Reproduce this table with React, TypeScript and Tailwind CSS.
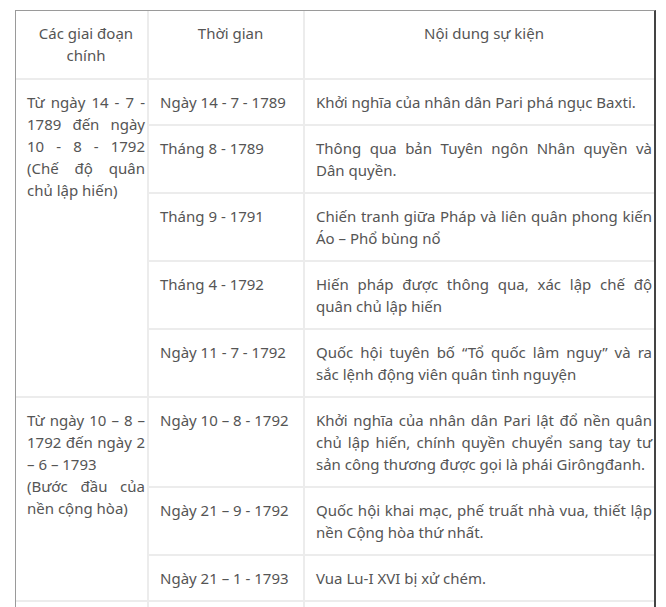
import React from "react";

type Row = { time: string; lines: string[] };

const groups: { stage: string[]; rows: Row[] }[] = [
  {
    stage: ["Từ ngày 14 - 7 -", "1789 đến ngày", "10 - 8 - 1792", "(Chế độ quân", "chủ lập hiến)"],
    rows: [
      { time: "Ngày 14 - 7 - 1789", lines: ["Khởi nghĩa của nhân dân Pari phá ngục Baxti."] },
      { time: "Tháng 8 - 1789", lines: ["Thông qua bản Tuyên ngôn Nhân quyền và", "Dân quyền."] },
      { time: "Tháng 9 - 1791", lines: ["Chiến tranh giữa Pháp và liên quân phong kiến", "Áo – Phổ bùng nổ"] },
      { time: "Tháng 4 - 1792", lines: ["Hiến pháp được thông qua, xác lập chế độ", "quân chủ lập hiến"] },
      {
        time: "Ngày 11 - 7 - 1792",
        lines: ["Quốc hội tuyên bố “Tổ quốc lâm nguy” và ra", "sắc lệnh động viên quân tình nguyện"],
      },
    ],
  },
  {
    stage: ["Từ ngày 10 – 8 –", "1792 đến ngày 2", "– 6 – 1793", "(Bước đầu của", "nền cộng hòa)"],
    rows: [
      {
        time: "Ngày 10 – 8 - 1792",
        lines: [
          "Khởi nghĩa của nhân dân Pari lật đổ nền quân",
          "chủ lập hiến, chính quyền chuyển sang tay tư",
          "sản công thương được gọi là phái Girôngđanh.",
        ],
      },
      {
        time: "Ngày 21 – 9 - 1792",
        lines: ["Quốc hội khai mạc, phế truất nhà vua, thiết lập", "nền Cộng hòa thứ nhất."],
      },
      { time: "Ngày 21 – 1 - 1793", lines: ["Vua Lu-I XVI bị xử chém."] },
    ],
  },
  {
    stage: ["Từ ngày 2 – 6 –", "1793 đến ngày 27", "– 7 – 1794"],
    rows: [
      {
        time: "Ngày 2 – 6 - 1793",
        lines: ["Khởi nghĩa của quần chúng nhân dân lật đổ", "phái Girôngđanh."],
      },
    ],
  },
];

const stageLast = new Set(["1789 đến ngày", "– 6 – 1793", "nền cộng hòa)", "chủ lập hiến)", "– 7 – 1794"]);

function Lines({ lines, spreadLast }: { lines: string[]; spreadLast?: (s: string) => boolean }) {
  return (
    <>
      {lines.map((l, i) => {
        const spread = spreadLast ? spreadLast(l) : i < lines.length - 1;
        return (
          <span
            key={i}
            className={`block whitespace-nowrap ${spread ? "text-justify [text-align-last:justify]" : "text-left"}`}
          >
            {l}
          </span>
        );
      })}
    </>
  );
}

const cell = "border-b-2 border-[#ececec] align-top pl-[11px] pr-[2px] py-[11px]";

export default function App() {
  return (
    <div
      className="bg-white w-[666px] h-[607px] overflow-hidden pt-[10px] pl-[15px] text-[#555] text-[15px] leading-[22px]"
      style={{ fontFamily: '"Noto Sans", "Open Sans", sans-serif' }}
    >
      <div className="w-[641px] border-l border-t border-[#9a9a9a] border-r-2 border-r-[#444]">
        <table className="w-full table-fixed border-collapse">
          <colgroup>
            <col className="w-[132px]" />
            <col className="w-[156px]" />
            <col />
          </colgroup>
          <thead>
            <tr>
              <th className={`${cell} border-r-2 text-center font-normal pb-[12px]`}>
                Các giai đoạn
                <br />
                chính
              </th>
              <th className={`${cell} border-r-2 text-center font-normal`}>Thời gian</th>
              <th className={`${cell} text-center font-normal`}>Nội dung sự kiện</th>
            </tr>
          </thead>
          <tbody>
            {groups.map((g, gi) =>
              g.rows.map((r, ri) => (
                <tr key={`${gi}-${ri}`}>
                  {ri === 0 && (
                    <td rowSpan={g.rows.length} className={`${cell} border-r-2`}>
                      <Lines lines={g.stage} spreadLast={(s) => !stageLast.has(s) || s === "1789 đến ngày"} />
                    </td>
                  )}
                  <td className={`${cell} border-r-2 whitespace-nowrap`}>{r.time}</td>
                  <td className={cell}>
                    <Lines lines={r.lines} />
                  </td>
                </tr>
              ))
            )}
          </tbody>
        </table>
      </div>
    </div>
  );
}
